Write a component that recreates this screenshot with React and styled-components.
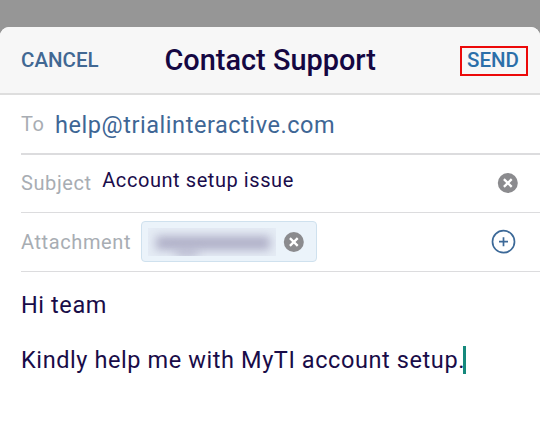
import React from "react";
import styled, { createGlobalStyle } from "styled-components";

const GlobalStyle = createGlobalStyle`
  * { box-sizing: border-box; }
  body { margin: 0; background: #969696; font-family: Roboto, "Liberation Sans", sans-serif; overflow: hidden; }
`;

const Screen = styled.main`
  display: flex;
  flex-direction: column;
  width: 540px;
  height: 433px;
  padding-top: 27px;
  background: #969696;
`;

const Sheet = styled.section`
  display: flex;
  flex-direction: column;
  flex: 1;
  border-radius: 9px 9px 0 0;
  background: #fff;
  overflow: hidden;
`;

const Header = styled.header`
  display: grid;
  grid-template-columns: 144px 1fr 80px;
  height: 68px;
  padding-left: 21px;
  align-items: center;
  background: #f7f7f7;
  border-bottom: 2px solid #dedede;
`;

const Action = styled.button`
  padding: 0;
  border: 0;
  background: none;
  font: 500 20.5px/30px Roboto, sans-serif;
  color: #416893;
  text-align: left;
`;

const SendAction = styled(Action)`
  width: 68px;
  height: 30px;
  padding: 0 0 2px 5px;
  border: 2px solid #ec0909;
  color: #2b6fa9;
  line-height: 24px;
  margin-top: 2px;
`;

const Title = styled.h1`
  margin: 0 0 0 -0.5px;
  font: 500 28.9px/34px Roboto, sans-serif;
  color: #150742;
`;

const Row = styled.div`
  display: flex;
  align-items: center;
  height: ${(p) => p.$height}px;
  margin-left: 21px;
  padding-right: ${(p) => p.$end || 0}px;
  padding-bottom: ${(p) => p.$lift || 0}px;
  border-bottom: ${(p) => p.$line || 1}px solid #dcdcde;
`;

const Label = styled.span`
  font-size: 20px;
  line-height: 24px;
  letter-spacing: 0.6px;
  color: #a8adb3;
`;

const Address = styled.span`
  margin-left: 10.5px;
  padding-top: 2px;
  font-size: 23.5px;
  line-height: 28px;
  letter-spacing: 0.55px;
  color: #3e6695;
`;

const Subject = styled.span`
  flex: 1;
  margin-left: 10.5px;
  padding-bottom: 6px;
  font-size: 20px;
  line-height: 24px;
  letter-spacing: 0.57px;
  color: #1a0c4b;
`;

const Chip = styled.div`
  display: flex;
  align-items: center;
  width: 175.5px;
  height: 41px;
  margin: 0 auto 0 10px;
  padding-left: 6px;
  gap: 7px;
  border: 1px solid #cfe1ee;
  border-radius: 4px;
  background: #ebf3fa;
`;

const Redacted = styled.div`
  width: 128px;
  height: 28px;
  overflow: hidden;
  background: #e5ecf5;
`;

const Smudge = styled.div`
  width: ${(p) => p.$width}px;
  height: ${(p) => p.$height}px;
  margin: ${(p) => p.$margin};
  background: #b0b0c8;
  filter: blur(5px);
`;

const Message = styled.div`
  padding: 18px 21px;
  font-size: 23.5px;
  line-height: 30px;
  letter-spacing: 0.59px;
  color: #190c48;
`;

const Paragraph = styled.p`
  display: flex;
  align-items: center;
  height: 30px;
  margin: 0 0 25px;
  white-space: nowrap;
`;

const Caret = styled.span`
  width: 3px;
  height: 28px;
  margin-left: -1.5px;
  background: #16897c;
`;

const ClearIcon = () => (
  <svg width="22" height="22" viewBox="0 0 22 22" aria-label="Clear">
    <circle cx="10.8" cy="11" r="10" fill="#8b8b8e" />
    <path d="M6.9 7.1 14.7 14.9M14.7 7.1 6.9 14.9" stroke="#fff" strokeWidth="2.3" />
  </svg>
);

const AddIcon = () => (
  <svg width="26" height="26" viewBox="0 0 26 26" fill="none" stroke="#3c6998" aria-label="Add attachment">
    <circle cx="12.5" cy="12.7" r="11" strokeWidth="1.7" />
    <path d="M12.5 8.2v9M8 12.7h9" strokeWidth="1.7" />
  </svg>
);

export default function App() {
  return (
    <Screen>
      <GlobalStyle />
      <Sheet>
        <Header>
          <Action>CANCEL</Action>
          <Title>Contact Support</Title>
          <SendAction>SEND</SendAction>
        </Header>
        <Row $height={60} $line={2}>
          <Label>To</Label>
          <Address>help@trialinteractive.com</Address>
        </Row>
        <Row $height={58} $end={21} $lift={1}>
          <Label>Subject</Label>
          <Subject>Account setup issue</Subject>
          <ClearIcon />
        </Row>
        <Row $height={59} $end={23} $lift={1}>
          <Label>Attachment</Label>
          <Chip>
            <Redacted>
              <Smudge $width={114} $height={14} $margin="8px 0 0 8px" />
              <Smudge $width={22} $height={6} $margin="0 0 0 28px" />
            </Redacted>
            <ClearIcon />
          </Chip>
          <AddIcon />
        </Row>
        <Message>
          <Paragraph>Hi team</Paragraph>
          <Paragraph>
            Kindly help me with MyTI account setup.
            <Caret />
          </Paragraph>
        </Message>
      </Sheet>
    </Screen>
  );
}
